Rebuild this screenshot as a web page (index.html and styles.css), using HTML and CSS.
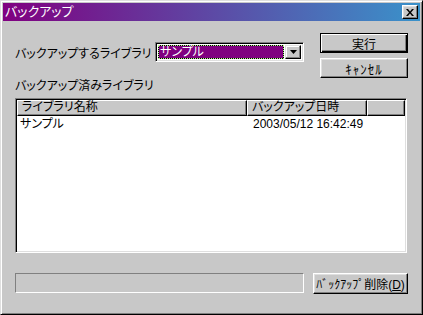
FILE: index.html
```html
<!DOCTYPE html>
<html lang="ja">
<head>
  <meta charset="UTF-8">
  <title>バックアップ</title>
  <link rel="stylesheet" href="styles.css">
</head>
<body>
  <div class="window">
    <!-- タイトルバー -->
    <div class="titlebar">
      <span class="title">バックアップ</span>
      <button class="close-btn" aria-label="閉じる">
        <svg width="8" height="7" viewBox="0 0 8 7"><path d="M0 0h2l2 2.5L6 0h2L5 3.5 8 7H6L4 4.5 2 7H0l3-3.5z" fill="#000"/></svg>
      </button>
    </div>

    <div class="content">
      <div class="top-row">
        <div class="source">
          <label class="label">バックアップするライブラリ</label>
          <div class="combo">
            <div class="combo-field">
              <div class="combo-value">サンプル</div>
            </div>
            <div class="combo-arrow">
              <svg width="7" height="4" viewBox="0 0 7 4"><path d="M0 0h7L3.5 4z" fill="#000"/></svg>
            </div>
          </div>
        </div>
        <div class="actions">
          <button class="btn btn-default">実行</button>
          <button class="btn btn-cancel">ｷｬﾝｾﾙ</button>
        </div>
      </div>

      <div class="label list-label">バックアップ済みライブラリ</div>

      <!-- 一覧 -->
      <div class="listview">
        <div class="list-header">
          <div class="col col-name">ライブラリ名称</div>
          <div class="col col-date">バックアップ日時</div>
          <div class="col col-rest"></div>
        </div>
        <div class="list-row">
          <div class="cell-name">サンプル</div>
          <div class="cell-date">2003/05/12 16:42:49</div>
        </div>
      </div>

      <div class="bottom-row">
        <div class="progress"></div>
        <button class="btn btn-delete">ﾊﾞｯｸｱｯﾌﾟ削除(<u>D</u>)</button>
      </div>
    </div>
  </div>
</body>
</html>
```

FILE: styles.css
```css
/* 全体 */
body {
  margin: 0;
  font-family: "Liberation Sans", "Noto Sans CJK JP", sans-serif;
  font-size: 12px;
  color: #000;
}

/* ウィンドウ枠 */
.window {
  width: 423px;
  height: 315px;
  box-sizing: border-box;
  background: #c8c8c8;
  border: 1px solid;
  border-color: #dfdfdf #000 #000 #dfdfdf;
  box-shadow: inset 1px 1px #fff, inset -1px -1px #808080;
  padding: 2px;
  display: flex;
  flex-direction: column;
}

/* タイトルバー */
.titlebar {
  height: 18px;
  background: linear-gradient(to right, #800080, #3a92ca);
  display: flex;
  align-items: center;
  justify-content: space-between;
  padding: 0 2px 0 2px;
}
.title {
  color: #fff;
  font-size: 13px;
  font-feature-settings: "palt";
  line-height: 18px;
}
.close-btn {
  width: 16px;
  height: 14px;
  padding: 0;
  background: #c8c8c8;
  border: 1px solid;
  border-color: #fff #000 #000 #fff;
  box-shadow: inset -1px -1px #808080, inset 1px 1px #dfdfdf;
  display: flex;
  align-items: center;
  justify-content: center;
}

/* 本体 */
.content {
  flex: 1;
  padding: 12px 12px 0 12px;
  display: flex;
  flex-direction: column;
}
.label {
  font-feature-settings: "palt";
  white-space: nowrap;
}

.top-row {
  display: flex;
  height: 45px;
}
.source {
  flex: 1;
  display: flex;
  align-items: center;
  height: 20px;
  margin-top: 9px;
}
.combo {
  margin-left: auto;
  width: 149px;
  height: 20px;
  box-sizing: border-box;
  border: 1px solid;
  border-color: #808080 #fff #fff #808080;
  box-shadow: inset 1px 1px #000, inset -1px -1px #dfdfdf;
  background: #fff;
  padding: 2px;
  display: flex;
}
.combo-field {
  flex: 1;
  padding: 0 1px 0 0;
}
.combo-value {
  height: 14px;
  border: 1px dotted #b4f08c;
  border-width: 1px;
  box-sizing: border-box;
  background: linear-gradient(#800080, #800080) padding-box, linear-gradient(#000, #000) border-box;
  color: #fff;
  line-height: 12px;
  padding-left: 1px;
  font-feature-settings: "palt";
}
.combo-arrow {
  width: 16px;
  box-sizing: border-box;
  background: #c8c8c8;
  border: 1px solid;
  border-color: #dfdfdf #000 #000 #dfdfdf;
  box-shadow: inset -1px -1px #808080, inset 1px 1px #fff;
  display: flex;
  align-items: center;
  justify-content: center;
}

.actions {
  width: 88px;
  margin-left: 16px;
  display: flex;
  flex-direction: column;
  gap: 5px;
}

/* ボタン */
.btn {
  height: 20px;
  padding: 0;
  background: #c8c8c8;
  font: inherit;
  color: #000;
  border: 1px solid;
  border-color: #fff #000 #000 #fff;
  box-shadow: inset -1px -1px #808080, inset 1px 1px #dfdfdf;
}
.btn-default {
  border-color: #000;
  box-shadow: inset 1px 1px #fff, inset -1px -1px #000, inset -2px -2px #808080;
}
.btn-cancel {
  font-size: 13px;
  letter-spacing: 1px;
}

.list-label {
  height: 16px;
  line-height: 16px;
}

/* リストビュー */
.listview {
  margin-top: 4px;
  margin-right: 1px;
  height: 155px;
  box-sizing: border-box;
  background: #fff;
  border: 1px solid;
  border-color: #808080 #fff #fff #808080;
  box-shadow: inset 1px 1px #000, inset -1px -1px #dfdfdf;
  padding: 1px;
}
.list-header {
  display: flex;
  height: 16px;
}
.col {
  box-sizing: border-box;
  background: #c8c8c8;
  border: 1px solid;
  border-color: #fff #000 #000 #fff;
  box-shadow: inset -1px -1px #808080;
  line-height: 13px;
  padding-left: 4px;
  font-feature-settings: "palt";
  white-space: nowrap;
}
.col-name { width: 230px; }
.col-date { width: 120px; }
.col-rest { flex: 1; }

.list-row {
  display: flex;
  height: 14px;
  line-height: 14px;
  margin-top: 1px;
}
.cell-name {
  width: 230px;
  padding-left: 3px;
  box-sizing: border-box;
  font-feature-settings: "palt";
}
.cell-date {
  padding-left: 6px;
}

/* 下段 */
.bottom-row {
  display: flex;
  margin-top: 20px;
  height: 21px;
}
.progress {
  width: 289px;
  box-sizing: border-box;
  height: 20px;
  border: 1px solid;
  border-color: #808080 #fff #fff #808080;
}
.btn-delete {
  width: 95px;
  height: 21px;
  margin-left: auto;
}
.btn-delete u {
  text-underline-offset: 1px;
}
```
